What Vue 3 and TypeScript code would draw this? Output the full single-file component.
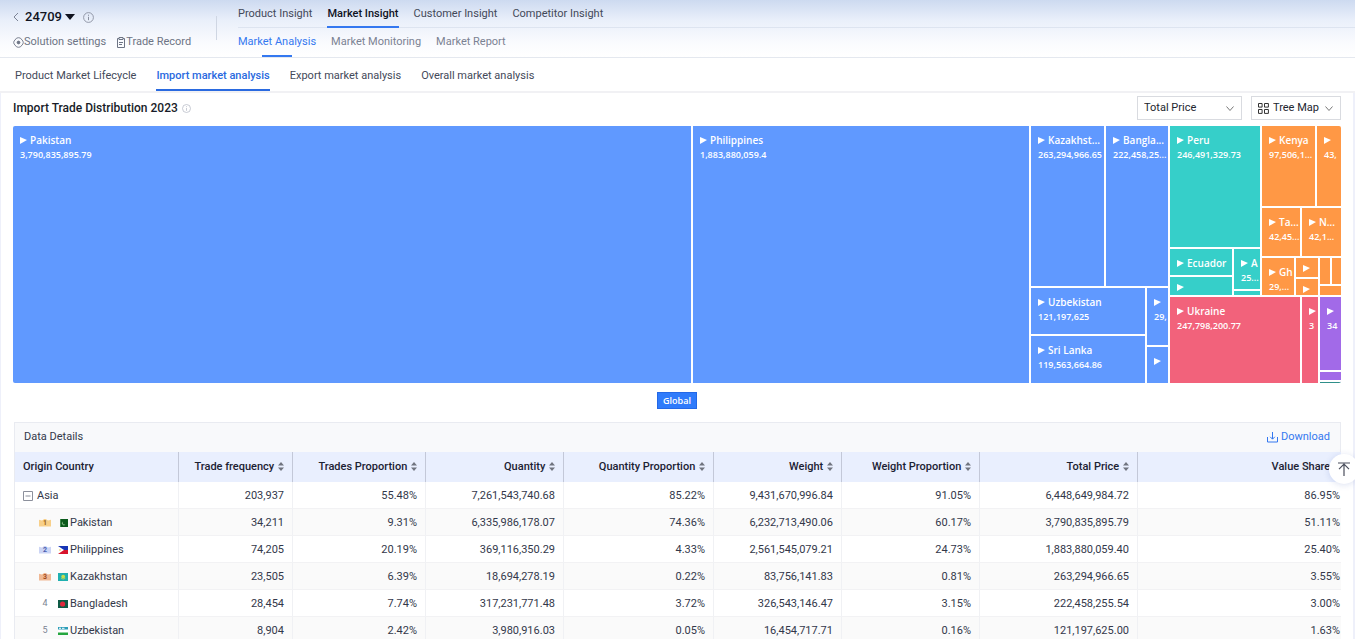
<script setup lang="ts">
import { ref } from 'vue'

interface Tile {
  // grid lines: row start, column start, row end, column end
  area: [number, number, number, number]
  tone: 'blue' | 'teal' | 'orange' | 'red' | 'purple' | 'green'
  name?: string
  value?: string
  marker?: boolean
  low?: boolean
}

interface Row {
  rank: number
  flag: string
  name: string
  cells: string[]
}

const mainTabs = ['Product Insight', 'Market Insight', 'Customer Insight', 'Competitor Insight']
const subTabs = ['Market Analysis', 'Market Monitoring', 'Market Report']
const sectionTabs = ['Product Market Lifecycle', 'Import market analysis', 'Export market analysis', 'Overall market analysis']

const metric = ref('Total Price')
const view = ref('Tree Map')
const expanded = ref(true)

const tiles: Tile[] = [
  { area: [1, 1, 15, 2], tone: 'blue', name: 'Pakistan', value: '3,790,835,895.79', marker: true },
  { area: [1, 2, 15, 3], tone: 'blue', name: 'Philippines', value: '1,883,880,059.4', marker: true },
  { area: [1, 3, 8, 4], tone: 'blue', name: 'Kazakhst...', value: '263,294,966.65', marker: true },
  { area: [1, 4, 8, 6], tone: 'blue', name: 'Bangla...', value: '222,458,25...', marker: true },
  { area: [8, 3, 11, 5], tone: 'blue', name: 'Uzbekistan', value: '121,197,625', marker: true },
  { area: [11, 3, 15, 5], tone: 'blue', name: 'Sri Lanka', value: '119,563,664.86', marker: true },
  { area: [8, 5, 12, 6], tone: 'blue', value: '29,', marker: true },
  { area: [12, 5, 15, 6], tone: 'blue', marker: true },
  { area: [1, 6, 3, 8], tone: 'teal', name: 'Peru', value: '246,491,329.73', marker: true },
  { area: [3, 6, 5, 7], tone: 'teal', name: 'Ecuador', marker: true },
  { area: [5, 6, 10, 7], tone: 'teal', marker: true, low: true },
  { area: [3, 7, 9, 8], tone: 'teal', name: 'A', value: '25...', marker: true },
  { area: [9, 7, 10, 8], tone: 'teal' },
  { area: [1, 8, 2, 11], tone: 'orange', name: 'Kenya', value: '97,506,1...', marker: true },
  { area: [1, 11, 2, 14], tone: 'orange', value: '43,', marker: true },
  { area: [2, 8, 4, 10], tone: 'orange', name: 'Ta...', value: '42,45...', marker: true },
  { area: [2, 10, 4, 14], tone: 'orange', name: 'N...', value: '42,1...', marker: true },
  { area: [4, 8, 10, 9], tone: 'orange', name: 'Gh', value: '29,...', marker: true },
  { area: [4, 9, 6, 12], tone: 'orange', marker: true, low: true },
  { area: [6, 9, 10, 12], tone: 'orange', marker: true, low: true },
  { area: [4, 12, 7, 13], tone: 'orange' },
  { area: [4, 13, 7, 14], tone: 'orange' },
  { area: [7, 12, 10, 14], tone: 'orange' },
  { area: [10, 6, 15, 10], tone: 'red', name: 'Ukraine', value: '247,798,200.77', marker: true },
  { area: [10, 10, 15, 12], tone: 'red', value: '3', marker: true },
  { area: [10, 12, 13, 14], tone: 'purple', value: '34', marker: true },
  { area: [13, 12, 14, 14], tone: 'purple' },
  { area: [14, 12, 15, 14], tone: 'green' },
]

const columns = ['Trade frequency', 'Trades Proportion', 'Quantity', 'Quantity Proportion', 'Weight', 'Weight Proportion', 'Total Price', 'Value Share']

const total = ['203,937', '55.48%', '7,261,543,740.68', '85.22%', '9,431,670,996.84', '91.05%', '6,448,649,984.72', '86.95%']

const rows: Row[] = [
  { rank: 1, flag: 'pk', name: 'Pakistan', cells: ['34,211', '9.31%', '6,335,986,178.07', '74.36%', '6,232,713,490.06', '60.17%', '3,790,835,895.79', '51.11%'] },
  { rank: 2, flag: 'ph', name: 'Philippines', cells: ['74,205', '20.19%', '369,116,350.29', '4.33%', '2,561,545,079.21', '24.73%', '1,883,880,059.40', '25.40%'] },
  { rank: 3, flag: 'kz', name: 'Kazakhstan', cells: ['23,505', '6.39%', '18,694,278.19', '0.22%', '83,756,141.83', '0.81%', '263,294,966.65', '3.55%'] },
  { rank: 4, flag: 'bd', name: 'Bangladesh', cells: ['28,454', '7.74%', '317,231,771.48', '3.72%', '326,543,146.47', '3.15%', '222,458,255.54', '3.00%'] },
  { rank: 5, flag: 'uz', name: 'Uzbekistan', cells: ['8,904', '2.42%', '3,980,916.03', '0.05%', '16,454,717.71', '0.16%', '121,197,625.00', '1.63%'] },
]
</script>

<template>
  <div class="page">
    <header class="top">
      <div class="project">
        <div class="project-line">
          <button class="plain" aria-label="Back">
            <svg width="6" height="10" viewBox="0 0 6 10"><path d="M5 1 1 5l4 4" fill="none" stroke="#7c8496" /></svg>
          </button>
          <button class="plain code">
            24709
            <svg width="10" height="6" viewBox="0 0 10 6"><path d="M0 0h10L5 6z" fill="#10131f" /></svg>
          </button>
          <svg class="info" width="11" height="11" viewBox="0 0 11 11">
            <circle cx="5.5" cy="5.5" r="4.9" fill="none" stroke="#8a90a0" stroke-width=".9" />
            <path d="M5.5 4.8v3.4M5.5 2.7v1.1" stroke="#8a90a0" />
          </svg>
        </div>
        <div class="project-links">
          <a href="#settings">
            <svg width="11" height="11" viewBox="0 0 11 11" fill="none" stroke="#6d7484" stroke-width=".9">
              <path d="M3.6 1.1Q5.5.3 7.4 1.1L9.9 4q.8 1.5 0 3L7.4 9.9q-1.9.8-3.8 0L1.1 7q-.8-1.5 0-3z" />
              <circle cx="5.5" cy="5.5" r="1.4" fill="#6d7484" />
            </svg>Solution settings
          </a>
          <a href="#record">
            <svg width="10" height="11" viewBox="0 0 10 11" fill="none" stroke="#6d7484">
              <path d="M3 1.5H1.5v9h7v-9H7" />
              <path d="M3 .5h4v2H3zM3 5.5h4M3 7.5h3" />
            </svg>Trade Record
          </a>
        </div>
      </div>
      <div class="divider"></div>
      <div class="menus">
        <nav class="main-tabs" aria-label="Insights">
          <a v-for="(t, i) in mainTabs" :key="t" href="#" :class="{ active: i === 1 }">{{ t }}</a>
        </nav>
        <nav class="sub-tabs" aria-label="Market">
          <a v-for="(t, i) in subTabs" :key="t" href="#" :class="{ active: i === 0 }">{{ t }}</a>
        </nav>
      </div>
    </header>

    <nav class="section-tabs" aria-label="Analysis">
      <a v-for="(t, i) in sectionTabs" :key="t" href="#" :class="{ active: i === 1 }">{{ t }}</a>
    </nav>

    <main class="panel">
      <div class="title-row">
        <h1>Import Trade Distribution 2023</h1>
        <svg class="title-info" width="9" height="9" viewBox="0 0 9 9">
          <circle cx="4.5" cy="4.5" r="4" fill="none" stroke="#b9bdc8" stroke-width=".8" />
          <path d="M4.5 4v2.8M4.5 2.2v.9" stroke="#b9bdc8" stroke-width=".8" />
        </svg>
        <div class="filters">
          <label class="picker metric">
            <select v-model="metric" aria-label="Metric">
              <option>Total Price</option>
              <option>Quantity</option>
              <option>Weight</option>
            </select>
            <svg class="chevron" width="8" height="5" viewBox="0 0 8 5"><path d="m.5.5 3.5 4 3.5-4" fill="none" stroke="#777" /></svg>
          </label>
          <label class="picker view">
            <svg width="11" height="11" viewBox="0 0 11 11" fill="none" stroke="#333">
              <path d="M.5.5h3.6v3.6H.5zM6.5.5h3.9v3.6H6.5zM.5 6.5h3.6v3.9H.5zM6.5 6.5h3.9v3.9H6.5z" />
            </svg>
            <select v-model="view" aria-label="Chart type">
              <option>Tree Map</option>
              <option>Bar Chart</option>
            </select>
            <svg class="chevron" width="8" height="5" viewBox="0 0 8 5"><path d="m.5.5 3.5 4 3.5-4" fill="none" stroke="#777" /></svg>
          </label>
        </div>
      </div>

      <div class="treemap">
        <div class="tiles">
          <div
            v-for="(t, i) in tiles"
            :key="i"
            class="tile"
            :class="[t.tone, { low: t.low }]"
            :style="{ gridArea: t.area.join(' / ') }"
          >
            <div v-if="t.marker" class="tile-name"><i class="arrow"></i>{{ t.name }}</div>
            <div v-if="t.value" class="tile-value">{{ t.value }}</div>
          </div>
        </div>
      </div>
      <div class="crumbs"><button class="crumb">Global</button></div>

      <section class="details">
        <div class="details-head">
          <h2>Data Details</h2>
          <button class="plain download">
            <svg width="11" height="11" viewBox="0 0 11 11" fill="none" stroke="#3478f0">
              <path d="M.5 5v5h10V5M5.5 0v7M3.2 4.8l2.3 2.4 2.3-2.4" />
            </svg>
            Download
          </button>
        </div>
        <table>
          <colgroup>
            <col class="w-country" /><col class="w-freq" /><col class="w-trades" /><col class="w-qty" /><col class="w-qtyp" />
            <col class="w-weight" /><col class="w-weightp" /><col class="w-price" /><col class="w-share" />
          </colgroup>
          <thead>
            <tr>
              <th>Origin Country</th>
              <th v-for="c in columns" :key="c">
                {{ c }}
                <svg class="sort" width="6" height="9" viewBox="0 0 6 9"><path d="M3 0l3 3.5H0zM3 9l3-3.5H0z" fill="#70747f" /></svg>
              </th>
            </tr>
          </thead>
          <tbody>
            <tr>
              <td>
                <div class="group">
                  <button class="plain toggle" aria-label="Toggle Asia" @click="expanded = !expanded">
                    <svg width="10" height="10" viewBox="0 0 10 10" fill="none" stroke="#8c909c"><path d="M.5.5h9v9h-9zM2.5 5h5" /></svg>
                  </button>
                  Asia
                </div>
              </td>
              <td v-for="(c, i) in total" :key="i">{{ c }}</td>
            </tr>
            <template v-if="expanded">
              <tr v-for="r in rows" :key="r.name">
                <td>
                  <div class="country">
                    <span class="rank" :class="'r' + r.rank">{{ r.rank }}</span>
                    <svg class="flag" width="10" height="8" viewBox="0 0 10 8">
                      <template v-if="r.flag === 'pk'">
                        <path d="M2 0h8v8H2z" fill="#0b5a1c" />
                        <path d="M2 0h1v8H2z" fill="#3d8a4b" />
                        <path d="M5 2.4a2 2 0 1 0 2.6 2.9A2 2 0 0 1 5 2.4z" fill="#8fc08f" />
                      </template>
                      <template v-else-if="r.flag === 'ph'">
                        <path d="M0 0h10v4H0z" fill="#1735b5" />
                        <path d="M0 4h10v4H0z" fill="#d8142c" />
                        <path d="M0 0l6 4-6 4z" fill="#fff" />
                        <circle cx="2" cy="4" r=".8" fill="#e8c33b" />
                      </template>
                      <template v-else-if="r.flag === 'kz'">
                        <path d="M0 0h10v8H0z" fill="#1fb0b0" />
                        <circle cx="5.2" cy="3.6" r="1.9" fill="#c9dd4c" />
                        <path d="M3 5.2q2.2 2 4.4 0" fill="none" stroke="#c9dd4c" stroke-width=".7" />
                      </template>
                      <template v-else-if="r.flag === 'bd'">
                        <path d="M0 0h10v8H0z" fill="#0e5a45" />
                        <circle cx="4.6" cy="4" r="2.6" fill="#e0283c" />
                      </template>
                      <template v-else>
                        <path d="M0 0h10v8H0z" fill="#fff" />
                        <path d="M0 0h10v2.5H0z" fill="#2c9db8" />
                        <path d="M0 5.5h10V8H0z" fill="#25a63f" />
                        <circle cx="2" cy="1.3" r=".9" fill="#fff" />
                        <path d="M4 1.3h2.5" stroke="#fff" />
                      </template>
                    </svg>
                    <span>{{ r.name }}</span>
                  </div>
                </td>
                <td v-for="(c, i) in r.cells" :key="i">{{ c }}</td>
              </tr>
            </template>
          </tbody>
        </table>
      </section>
    </main>

    <button class="to-top" aria-label="Back to top">
      <svg width="14" height="14" viewBox="0 0 14 14" fill="none" stroke="#4b4f5c" stroke-width="1.2"><path d="M1 1h12M7 14V2M2 7.2l5-5 5 5" /></svg>
    </button>
  </div>
</template>

<style>
body {
  margin: 0;
}
</style>

<style scoped>
.page {
  height: 100vh;
  overflow: hidden;
  box-sizing: border-box;
  display: flex;
  flex-direction: column;
  background: #eef0fa;
  color: #33384a;
  font-family: Roboto, "Liberation Sans", sans-serif;
  font-size: 11px;
  line-height: 16px;
}
a {
  color: inherit;
  text-decoration: none;
}
button,
select {
  font: inherit;
  color: inherit;
}
.plain {
  padding: 0;
  border: 0;
  background: none;
  display: inline-flex;
  align-items: center;
}
svg {
  flex: none;
}
.top {
  flex: none;
  display: flex;
  height: 57px;
  border-bottom: 1px solid #e4e8ef;
  background: linear-gradient(#cddaf0, #e9effa 35%, #fafbfe 75%, #fff);
}
.project {
  width: 203px;
  padding: 9px 0 0 13px;
}
.project-line {
  display: flex;
  align-items: center;
}
.code {
  gap: 3px;
  margin: 0 8px 0 6px;
  font-size: 13px;
  font-weight: 500;
  color: #10131f;
}
.project-links {
  display: flex;
  gap: 10px;
  margin-top: 9px;
  color: #6d7484;
}
.project-links a {
  display: flex;
  align-items: center;
}
.divider {
  width: 1px;
  height: 24px;
  margin-top: 16px;
  background: #cfd6e3;
}
.menus {
  flex: 1;
  padding-left: 21px;
}
.main-tabs,
.sub-tabs {
  display: flex;
  gap: 15px;
}
.main-tabs {
  height: 27px;
  border-bottom: 1px solid #dde4f0;
}
.main-tabs a {
  height: 21px;
  padding-top: 6px;
  color: #434959;
}
.main-tabs .active {
  border-bottom: 2px solid #3478f0;
  height: 20px;
  color: #10131f;
  font-weight: 500;
}
.sub-tabs a {
  padding-top: 6px;
  height: 21px;
  color: #7b8293;
}
.sub-tabs .active {
  color: #3478f0;
}
.sub-tabs .active::after {
  content: "";
  display: block;
  width: 30px;
  height: 2px;
  margin: 5px auto 0;
  background: #3478f0;
}
.section-tabs {
  flex: none;
  display: flex;
  gap: 20px;
  padding-left: 15px;
  background: #fff;
  border-bottom: 2px solid #f1f1f4;
}
.section-tabs a {
  padding: 10px 0 5px;
  border-bottom: 2px solid transparent;
  color: #434959;
}
.section-tabs .active {
  color: #2a6ae0;
  border-color: #2a6ae0;
  font-weight: 500;
}
.panel {
  flex: 1;
  min-height: 0;
  margin: 0 2px 0 1px;
  padding: 3px 12px 0;
  background: #fff;
  overflow: hidden;
}
.title-row {
  display: flex;
  align-items: center;
  height: 24px;
  margin-bottom: 6px;
}
h1 {
  margin: 0;
  font-size: 12px;
  font-weight: 500;
  color: #181c28;
}
.title-info {
  margin-left: 4px;
}
.filters {
  display: flex;
  gap: 9px;
  margin-left: auto;
}
.picker {
  box-sizing: border-box;
  position: relative;
  display: flex;
  align-items: center;
  height: 24px;
  padding: 0 7px 0 6px;
  border: 1px solid #d9dbe0;
  background: #fff;
  color: #23262f;
}
.metric {
  width: 105px;
}
.view {
  width: 90px;
  gap: 4px;
}
.picker select {
  flex: 1;
  min-width: 0;
  padding: 0;
  border: 0;
  background: none;
  appearance: none;
}
.treemap {
  height: 257px;
  border-radius: 2px;
  overflow: hidden;
}
.tiles {
  display: grid;
  height: 259px;
  margin-right: -2px;
  grid-template-columns:
    minmax(0, 680fr) minmax(0, 338fr) minmax(0, 75fr) minmax(0, 41fr) minmax(0, 23fr) minmax(0, 64fr) minmax(0, 28fr)
    minmax(0, 34fr) minmax(0, 6fr) minmax(0, 15fr) minmax(0, 3fr) minmax(0, 12fr) minmax(0, 11fr);
  grid-template-rows:
    minmax(0, 82fr) minmax(0, 41fr) minmax(0, 9fr) minmax(0, 19fr) minmax(0, 2fr) minmax(0, 7fr) minmax(0, 2fr)
    minmax(0, 3fr) minmax(0, 6fr) minmax(0, 39fr) minmax(0, 11fr) minmax(0, 25fr) minmax(0, 10fr) minmax(0, 3fr);
}
.tile {
  min-width: 0;
  min-height: 0;
  overflow: hidden;
  padding: 7px 0 0 7px;
  border: solid #fff;
  border-width: 0 2px 2px 0;
  color: #fff;
  font-family: "Open Sans", "Noto Sans", sans-serif;
  font-weight: 600;
  white-space: nowrap;
}
.low {
  padding-top: 3px;
}
.tile:not(:has(div)) {
  padding: 0;
}
.blue { background: #6099ff; }
.teal { background: #36cfc9; }
.orange { background: #ff9845; }
.red { background: #f2627b; }
.purple { background: #a26ae8; }
.green { background: #2f8f8a; }
.tile-name {
  display: flex;
  align-items: center;
  gap: 3px;
  height: 14px;
  font-size: 10px;
}
.arrow {
  flex: none;
  border: solid transparent;
  border-width: 3px 0 4px 7px;
  border-left-color: #fff;
}
.tile-value {
  font-size: 9px;
  line-height: 16px;
}
.crumbs {
  display: flex;
  justify-content: center;
  padding: 9px 0 13px;
}
.crumb {
  height: 17px;
  padding: 0 5px;
  border: 1px solid #2468e6;
  background: #2f7bfb;
  color: #fff;
  font-family: "Open Sans", "Noto Sans", sans-serif;
  font-size: 9px;
  font-weight: 600;
  line-height: 15px;
}
.details {
  margin: 0 0 0 1px;
  border: 1px solid #e9ebf1;
  border-right: 0;
  overflow: hidden;
}
.details-head {
  display: flex;
  align-items: center;
  justify-content: space-between;
  height: 28px;
  padding: 0 10px 1px 9px;
  border-right: 1px solid #e9ebf1;
  background: #f8f9fb;
}
h2 {
  margin: 0;
  font-size: 11px;
  font-weight: 400;
}
.download {
  gap: 3px;
  color: #3478f0;
}
table {
  width: calc(100% + 8px);
  table-layout: fixed;
  border-collapse: separate;
  border-spacing: 0;
}
.w-country { width: 164px; }
.w-freq { width: 114px; }
.w-trades { width: 133px; }
.w-qty { width: 138px; }
.w-qtyp { width: 150px; }
.w-weight { width: 128px; }
.w-weightp { width: 138px; }
.w-price { width: 158px; }
.w-share { width: 211px; }
th,
td {
  box-sizing: border-box;
  padding: 0 8px;
  text-align: right;
  white-space: nowrap;
}
th {
  height: 30px;
  border-right: 1px solid #c3c8d8;
  background: #e9effe;
  color: #1c2233;
  font-weight: 500;
}
td {
  height: 27px;
  padding-top: 1px;
  border-right: 1px solid #f0f1f4;
  border-bottom: 1px solid #f2f2f4;
}
th:first-child,
td:first-child {
  text-align: left;
}
tbody tr:nth-child(even) {
  background: #fafafa;
}
.sort {
  margin-left: 1px;
  vertical-align: -1px;
}
.group,
.country {
  display: flex;
  align-items: center;
}
.group {
  gap: 4px;
}
.country {
  padding-left: 16px;
}
.rank {
  width: 12px;
  margin-right: 7px;
  font-size: 9px;
  line-height: 9px;
  text-align: center;
  color: #7b8293;
}
.r1,
.r2,
.r3 {
  height: 8px;
  font-size: 7px;
  line-height: 8px;
  font-weight: 700;
  clip-path: polygon(0 15%, 25% 25%, 50% 0, 75% 25%, 100% 15%, 100% 100%, 0 100%);
}
.r1 { background: #f8d08a; color: #9a6414; }
.r2 { background: #ccd5f5; color: #4a5fae; }
.r3 { background: #f0b894; color: #a34c20; }
.flag {
  margin-right: 2px;
}
.to-top {
  position: fixed;
  right: -4px;
  top: 454px;
  width: 30px;
  height: 30px;
  padding: 0;
  display: flex;
  align-items: center;
  justify-content: center;
  border: 0;
  border-radius: 50%;
  background: #fff;
  box-shadow: 0 1px 6px rgba(60, 90, 180, 0.18);
}
</style>
